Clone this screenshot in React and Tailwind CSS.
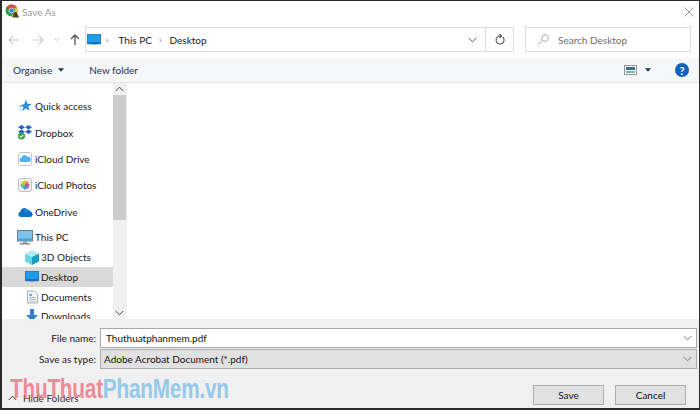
function Chrome() {
  return (
    <svg width="16" height="16" viewBox="0 0 16 16">
      <circle cx="6.500" cy="6.500" r="6" fill="#2e9e50" />
      <path d="M6.500.5a6 6 0 0 1 5.300 3.200H6.500A2.900 2.900 0 0 0 3.800 5.500L1.800 2.800A6 6 0 0 1 6.500.5z" fill="#d9483b" />
      <path d="M12 3.700a6 6 0 0 1-5.500 8.800l2.700-4.700a3 3 0 0 0-.2-4.100z" fill="#f3c437" />
      <circle cx="6.500" cy="6.500" r="2.500" fill="#3f7fe0" stroke="#fff" strokeWidth="0.600" />
      <path d="M10.500 8c1.400 0 2 1 2 2.200l1.500 3.300H7.500l1-3.300c0-1.200.6-2.200 2-2.200z" fill="#4f3a20" />
    </svg>
  );
}

function Monitor({ w = 18, h = 14 }) {
  return (
    <svg width={w} height={h} viewBox="0 0 18 14">
      <rect x="0.500" y="0.500" width="17" height="12" fill="#1f9be8" stroke="#1d6fb0" />
      <rect x="1" y="10.500" width="16" height="2" fill="#0f6cbd" />
      <rect x="5" y="13" width="8" height="1" fill="#8aa0b2" />
    </svg>
  );
}

function ThisPC() {
  return (
    <svg width="16" height="15" viewBox="0 0 16 15">
      <rect x="0.500" y="0.500" width="15" height="10.500" fill="#7cc4ee" stroke="#6b7c8a" />
      <rect x="1" y="8.500" width="14" height="2" fill="#4b9fd6" />
      <rect x="6" y="11" width="4" height="2" fill="#9aa5ae" />
      <rect x="3" y="13" width="10" height="1.500" fill="#7d8a94" />
    </svg>
  );
}

function Star() {
  return (
    <svg width="14" height="14" viewBox="0 0 14 14">
      <path d="M8 .5l1.500 4.200 4.300.2-3.400 2.700 1.200 4.300L8 9.400 4.200 12l1.300-4.300-3.800-.9 4.600-1.900z" fill="#2f8fdc" />
      <path d="M3 7 .5 8M3.500 9.500l-2 1.500" stroke="#7dbbe9" strokeWidth="1" />
    </svg>
  );
}

function Dropbox() {
  return (
    <svg width="14" height="15" viewBox="0 0 14 15">
      <path d="M3.500 0 7 2.200 3.500 4.500 0 2.200zM10.500 0 14 2.200 10.500 4.500 7 2.200zM3.500 4.500 7 6.800 3.500 9 0 6.800zM10.500 4.500 14 6.800 10.500 9 7 6.800z" fill="#2463c9" />
      <circle cx="3.500" cy="11" r="3.500" fill="#35a24a" />
      <path d="M1.800 11l1.300 1.300 2.200-2.400" stroke="#fff" strokeWidth="1.100" fill="none" />
    </svg>
  );
}

function ICloudDrive() {
  return (
    <svg width="14" height="14" viewBox="0 0 14 14">
      <rect x="0.500" y="0.500" width="13" height="13" rx="2.500" fill="#fff" stroke="#c4c4c4" />
      <path d="M3.500 10a2 2 0 0 1-.2-4A3 3 0 0 1 9 4.800 2.600 2.600 0 0 1 10.800 10z" fill="#55aef0" />
    </svg>
  );
}

function ICloudPhotos() {
  const petals = ["#f2b632", "#e8743b", "#d8427a", "#9a5bc4", "#4a7fd8", "#49b7d8", "#5cbb5a", "#b5cc3e"];
  return (
    <svg width="14" height="14" viewBox="0 0 14 14">
      <rect x="0.500" y="0.500" width="13" height="13" rx="2.500" fill="#f4f4f4" stroke="#bdbdbd" />
      {petals.map((c, i) => (
        <ellipse key={c} cx="7" cy="4.600" rx="1.600" ry="2.400" fill={c} fillOpacity="0.850" transform={`rotate(${i * 45} 7 7)`} />
      ))}
    </svg>
  );
}

function OneDrive() {
  return (
    <svg width="15" height="10" viewBox="0 0 15 10">
      <path d="M3 10a2.700 2.700 0 0 1-.7-5.300A4 4 0 0 1 9.400 2.600 3 3 0 0 1 12.500 4.500 2.800 2.800 0 0 1 12.200 10z" fill="#0f6fc6" />
      <path d="M6 4.200a3 3 0 0 1 3.500-1.500 3 3 0 0 1 3 1.800A2.800 2.800 0 0 0 9 6z" fill="#1a8adb" />
    </svg>
  );
}

function Cube() {
  return (
    <svg width="14" height="15" viewBox="0 0 14 15">
      <path d="M7 0 14 3.500 7 7 0 3.500z" fill="#b5ecf3" />
      <path d="M0 3.500 7 7v8L0 11.500z" fill="#6fd4e4" />
      <path d="M14 3.500 7 7v8l7-3.500z" fill="#1a9fc4" />
    </svg>
  );
}

function Doc() {
  return (
    <svg width="11" height="14" viewBox="0 0 12 14">
      <path d="M.5.500H8L11.500 4v9.500H.5z" fill="#f7f9fb" stroke="#9aa3ab" />
      <rect x="2.500" y="3.500" width="3" height="2.500" fill="#6aa9df" />
      <path d="M2.500 7.500h7M2.500 9.500h7M2.500 11.500h7" stroke="#a9b4bd" />
    </svg>
  );
}

function DownloadIcon() {
  return (
    <svg width="14" height="14" viewBox="0 0 14 14">
      <path d="M5 0h4v6h4L7 12 1 6h4z" fill="#2f7fd6" />
    </svg>
  );
}

function Chev({ className = "", color = "#666" }) {
  return (
    <svg width="9" height="6" viewBox="0 0 9 6" className={className}>
      <path d="M.7 1 4.500 4.800 8.300 1" fill="none" stroke={color} strokeWidth="1" />
    </svg>
  );
}

function SideRow({ icon, label, indent, selected, h }) {
  return (
    <div className={`flex items-center shrink-0 ${h} ${indent ? "pl-[22px]" : "pl-[15px]"} ${selected ? "bg-[#d9d9d9]" : ""}`}>
      <span className="flex justify-center items-center shrink-0 w-[16px]">{icon}</span>
      <span className={`${indent ? "ml-[1px]" : "ml-[2px]"} text-[#1a1a1a]`}>{label}</span>
    </div>
  );
}

export default function App() {
  return (
    <div
      className="relative w-[700px] h-[410px] overflow-hidden bg-white flex flex-col border-l-[2px] border-t-[1px] border-r-[1px] border-b-[2px] border-[#2a2a2a] text-[10px] leading-none"
      style={{ fontFamily: 'Lato, "Noto Sans", sans-serif' }}
    >
      {/* Title */}
      <div className="flex items-center h-[21px] shrink-0 pl-[3px] pr-[4px]">
        <Chrome />
        <span className="ml-[1px] text-[#9a9a9a]">Save As</span>
        <svg width="10" height="10" viewBox="0 0 10 10" className="ml-auto mr-[1px]">
          <path d="M.5.500l9 9M9.500.500l-9 9" stroke="#9a9a9a" strokeWidth="1" />
        </svg>
      </div>

      {/* Address */}
      <div className="flex items-center h-[35px] shrink-0">
        <div className="flex items-center w-[83px] shrink-0 pl-[6px]">
          <svg width="11" height="10" viewBox="0 0 11 10">
            <path d="M11 5H1M5 1 1 5l4 4" fill="none" stroke="#c8c8c8" strokeWidth="1.200" />
          </svg>
          <svg width="11" height="10" viewBox="0 0 11 10" className="ml-[14px]">
            <path d="M0 5h10M6 1l4 4-4 4" fill="none" stroke="#c8c8c8" strokeWidth="1.200" />
          </svg>
          <svg width="5" height="3" viewBox="0 0 5 3" className="ml-[10px]">
            <path d="M0 0l2.500 2.500L5 0" fill="none" stroke="#c8c8c8" />
          </svg>
          <svg width="10" height="11" viewBox="0 0 10 11" className="ml-[11px]">
            <path d="M5 11V1M1 5l4-4 4 4" fill="none" stroke="#555" strokeWidth="1.300" />
          </svg>
        </div>
        <div className="flex items-center w-[429px] h-[25px] shrink-0 border border-[#dcdcdc]">
          <span className="ml-[1px] flex"><Monitor w={14} h={11} /></span>
          <span className="ml-[5px] mr-[10px] text-[#777] text-[9px]">›</span>
          <span className="text-[#222]">This PC</span>
          <span className="ml-[7px] mr-[8px] text-[#777] text-[9px]">›</span>
          <span className="text-[#222]">Desktop</span>
          <span className="ml-auto w-[27px] h-full flex items-center justify-center border-r border-[#dcdcdc]">
            <Chev color="#555" />
          </span>
          <span className="w-[27px] h-full flex items-center justify-center">
            <svg width="10" height="11" viewBox="0 0 10 11">
              <path d="M7.800 3a4 4 0 1 1-3-1H6M4.500 0 6.500 2 4.500 4" fill="none" stroke="#555" strokeWidth="1.100" />
            </svg>
          </span>
        </div>
        <div className="flex items-center w-[166px] h-[25px] ml-[11px] shrink-0 border border-[#dcdcdc]">
          <svg width="11" height="11" viewBox="0 0 11 11" className="ml-[12px]">
            <circle cx="7" cy="4" r="3.300" fill="none" stroke="#b9a9a0" />
            <path d="M4.600 6.400.5 10.500" stroke="#b9a9a0" />
          </svg>
          <span className="ml-[9px] text-[#6f6f6f]">Search Desktop</span>
        </div>
      </div>

      {/* Toolbar */}
      <div className="flex items-center h-[25px] mt-[1px] shrink-0 bg-[#f5f6f7] border-b border-[#e6e6e6] text-[#1f3050]">
        <span className="ml-[11px]">Organise</span>
        <svg width="6" height="4" viewBox="0 0 7 4" className="ml-[6px]"><path d="M0 0h7L3.500 4z" fill="#1f3050" /></svg>
        <span className="ml-[25px]">New folder</span>
        <svg width="13" height="10" viewBox="0 0 13 10" className="ml-auto">
          <rect x="0.500" y="0.500" width="12" height="9" fill="#f4f7fa" stroke="#8c9aa6" />
          <rect x="2" y="2" width="9" height="3" fill="#3f6f8f" />
          <rect x="2" y="6" width="9" height="2" fill="#93b09a" />
        </svg>
        <svg width="6" height="4" viewBox="0 0 7 4" className="ml-[8px]"><path d="M0 0h7L3.500 4z" fill="#1f3050" /></svg>
        <span className="ml-[24px] mr-[10px] w-[14px] h-[14px] rounded-full bg-[#0f62b8] text-white flex items-center justify-center font-bold text-[11px]">?</span>
      </div>

      {/* Body */}
      <div className="flex flex-1 min-h-0">
        <div className="w-[111px] shrink-0 flex flex-col overflow-hidden pt-[10px]">
          <SideRow icon={<Star />} label="Quick access" h="h-[26.400px]" />
          <SideRow icon={<Dropbox />} label="Dropbox" h="h-[26.400px]" />
          <SideRow icon={<ICloudDrive />} label="iCloud Drive" h="h-[26.400px]" />
          <SideRow icon={<ICloudPhotos />} label="iCloud Photos" h="h-[26.400px]" />
          <SideRow icon={<OneDrive />} label="OneDrive" h="h-[26.400px]" />
          <div className="h-[19.800px] mt-[2.400px] shrink-0 flex items-center pl-[15px]">
            <ThisPC /><span className="ml-[2px] text-[#1a1a1a]">This PC</span>
          </div>
          <SideRow icon={<Cube />} label="3D Objects" indent h="h-[19.800px]" />
          <SideRow icon={<Monitor w={14} h={11} />} label="Desktop" indent selected h="h-[19.800px]" />
          <SideRow icon={<Doc />} label="Documents" indent h="h-[19.800px]" />
          <SideRow icon={<DownloadIcon />} label="Downloads" indent h="h-[19.800px]" />
        </div>
        <div className="w-[13px] shrink-0 flex flex-col items-stretch bg-[#f0f0f0]">
          <div className="h-[11px] flex items-center justify-center"><Chev className="rotate-180" color="#444" /></div>
          <div className="h-[125px] bg-[#cdcdcd] mt-[1px]" />
          <div className="mt-auto h-[13px] flex items-center justify-center"><Chev color="#444" /></div>
        </div>
        <div className="w-[1px] shrink-0 bg-[#f0f0f0]" />
        <div className="flex-1 bg-white" />
      </div>

      {/* Bottom panel */}
      <div className="h-[89px] shrink-0 bg-[#f0f0f0] flex flex-col">
        <div className="flex items-center h-[20px] mt-[9px]">
          <span className="w-[94px] text-right text-[#1a1a1a] shrink-0">File name:</span>
          <div className="ml-[4px] flex-1 mr-[2px] h-[20px] bg-white border border-[#a8a8a8] flex items-center justify-between pl-[5px] pr-[4px]">
            <span className="text-[#111]">Thuthuatphanmem.pdf</span>
            <Chev color="#777" />
          </div>
        </div>
        <div className="flex items-center h-[20px] mt-[1px]">
          <span className="w-[94px] text-right text-[#1a1a1a] shrink-0">Save as type:</span>
          <div className="ml-[4px] flex-1 mr-[2px] h-[20px] bg-[#e1e1e1] border border-[#adadad] flex items-center justify-between pl-[3px] pr-[4px]">
            <span className="text-[#111]">Adobe Acrobat Document (*.pdf)</span>
            <Chev color="#777" />
          </div>
        </div>
        <div className="flex items-start mt-[16px]">
          <div className="flex items-center ml-[6px] mt-[8px]">
            <Chev className="rotate-180" color="#333" />
            <span className="ml-[6px] text-[#333]">Hide Folders</span>
          </div>
          <div className="ml-auto flex mr-[13px] gap-[11px]">
            <div className="w-[71px] h-[20px] bg-[#e1e1e1] border border-[#adadad] flex items-center justify-center text-[#111]">Save</div>
            <div className="w-[71px] h-[20px] bg-[#e1e1e1] border border-[#adadad] flex items-center justify-center text-[#111]">Cancel</div>
          </div>
        </div>
      </div>

      {/* Watermark */}
      <div
        className="absolute left-[8px] top-[375px] text-[27px] font-bold leading-none whitespace-nowrap opacity-70 tracking-[-0.300px] scale-x-[0.77] origin-left"
        style={{ fontFamily: '"Liberation Sans", sans-serif' }}
      >
        <span className="text-[#ee5f72]">ThuThuat</span>
        <span className="text-[#6db9e8]">PhanMem.vn</span>
      </div>
    </div>
  );
}
